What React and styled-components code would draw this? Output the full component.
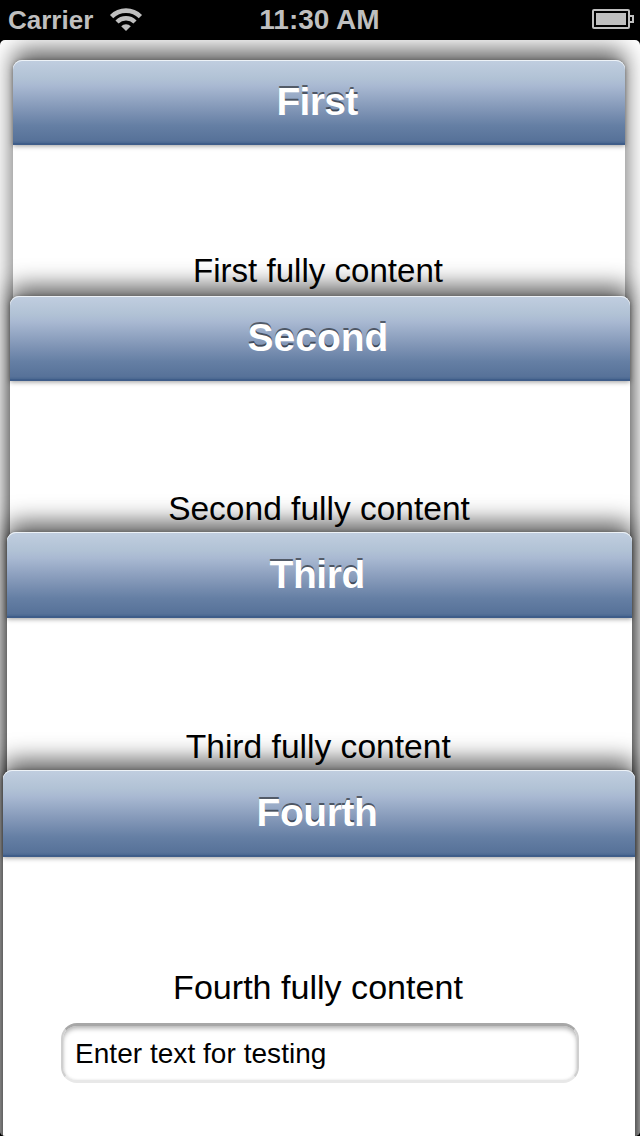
import React from "react";
import styled, { createGlobalStyle } from "styled-components";

const GlobalStyle = createGlobalStyle`
  * { box-sizing: border-box; }
  body { margin: 0; background: #000; }
`;

const Screen = styled.div`
  width: 640px;
  height: 1136px;
  display: flex;
  flex-direction: column;
  overflow: hidden;
  background: #000;
  color: #000;
  font-family: "Liberation Sans", Arial, sans-serif;
`;

const StatusBar = styled.header`
  height: 40px;
  flex: none;
  display: grid;
  grid-template-columns: 1fr auto 1fr;
  align-items: center;
  padding: 0 6px 0 8px;
  color: #bfbfbf;
  font-size: 26px;
  font-weight: bold;
  line-height: 40px;
`;

const Signal = styled.div`
  display: flex;
  align-items: center;
  gap: 16px;
`;

const Clock = styled.time`
  padding-right: 3px;
  font-size: 28px;
`;

const Battery = styled.svg`
  justify-self: end;
  margin-top: -2px;
`;

const Stack = styled.main`
  flex: 1;
  min-height: 0;
  display: grid;
  grid-template: 1096px / 640px;
  overflow: hidden;
  border-radius: 5px;
  background: #fff;
`;

const Card = styled.section`
  grid-area: 1 / 1;
  margin: ${(p) => p.$top}px ${(p) => p.$right}px 0 ${(p) => p.$left}px;
  height: 1150px;
  border-radius: 9px 9px 0 0;
  background: #fff;
  box-shadow: 0 -10px 23px rgba(0, 0, 0, 0.63);
`;

const TitleBar = styled.div`
  height: ${(p) => p.$height}px;
  border-radius: 9px 9px 0 0;
  border-bottom: 2px solid #3f5d89;
  background: linear-gradient(#c1cee0 0%, #b1c2d5 22%, #a9b9d2 31%, #7f94b5 61%, #657fa4 79%, #577299 97%, #4a6891 100%);
  box-shadow: inset 0 1px 0 #edf2f7, 0 1px 5px rgba(0, 0, 0, 0.4);
  display: flex;
  justify-content: center;
  padding-right: 4px;
`;

const Title = styled.h2`
  margin: 0;
  color: #fff;
  font-size: 39px;
  line-height: ${(p) => p.$line}px;
  letter-spacing: ${(p) => p.$tracking}px;
  text-shadow: 0 -2px 0 rgba(0, 0, 0, 0.5);
`;

const Content = styled.div`
  display: flex;
  flex-direction: column;
  align-items: center;
  padding-top: ${(p) => p.$offset}px;
`;

const Label = styled.p`
  margin: 0;
  padding-right: 2px;
  font-size: ${(p) => p.$size}px;
  line-height: 40px;
  white-space: nowrap;
`;

const TextField = styled.input`
  width: 518px;
  height: 60px;
  margin: 16px 0 0 2px;
  padding: 1px 12px 0;
  border: solid;
  border-width: 3px 2px;
  border-color: #a7a7a7 #cfcfcf #e8e8e8;
  border-radius: 16px;
  background: #fff;
  box-shadow: inset 0 3px 4px rgba(0, 0, 0, 0.25), inset 0 0 3px rgba(0, 0, 0, 0.08);
  color: #000;
  font-family: inherit;
  font-size: 28px;
  letter-spacing: 0.04px;
  outline: none;
`;

const cards = [
  { name: "First", top: 20, left: 13, right: 15, bar: 85, line: 83, offset: 106, tracking: -0.7, size: 33.1 },
  { name: "Second", top: 256, left: 10, right: 10, bar: 85, line: 83, offset: 108, tracking: 0, size: 33.5 },
  { name: "Third", top: 492, left: 6.5, right: 8, bar: 86, line: 85, offset: 109, tracking: -0.4, size: 33.6 },
  { name: "Fourth", top: 730, left: 3, right: 5, bar: 87, line: 85, offset: 110, tracking: -0.4, size: 34.1, field: true },
];

export default function App() {
  return (
    <Screen>
      <GlobalStyle />
      <StatusBar>
        <Signal>
          <span>Carrier</span>
          <svg width="34" height="24" viewBox="0 0 34 24" fill="none" stroke="#bfbfbf">
            <path d="M2.6 8.6A20.4 20.4 0 0 1 31.4 8.6" strokeWidth="4.6" />
            <path d="M8 14A12.7 12.7 0 0 1 26 14" strokeWidth="4.4" />
            <path d="M12.2 18.2A6.8 6.8 0 0 1 21.8 18.2L17 23Z" fill="#bfbfbf" stroke="none" />
          </svg>
        </Signal>
        <Clock>11:30 AM</Clock>
        <Battery width="42" height="20" viewBox="0 0 42 20" fill="none" stroke="#bfbfbf" strokeWidth="2">
          <rect x="1" y="1" width="36" height="18" rx="1" />
          <rect x="4" y="4" width="30" height="12" fill="#bfbfbf" stroke="none" />
          <path d="M38 7h3v6h-3" />
        </Battery>
      </StatusBar>
      <Stack>
        {cards.map((card) => (
          <Card key={card.name} $top={card.top} $left={card.left} $right={card.right}>
            <TitleBar $height={card.bar}>
              <Title $tracking={card.tracking} $line={card.line}>{card.name}</Title>
            </TitleBar>
            <Content $offset={card.offset}>
              <Label $size={card.size}>{card.name} fully content</Label>
              {card.field && <TextField defaultValue="Enter text for testing" />}
            </Content>
          </Card>
        ))}
      </Stack>
    </Screen>
  );
}
